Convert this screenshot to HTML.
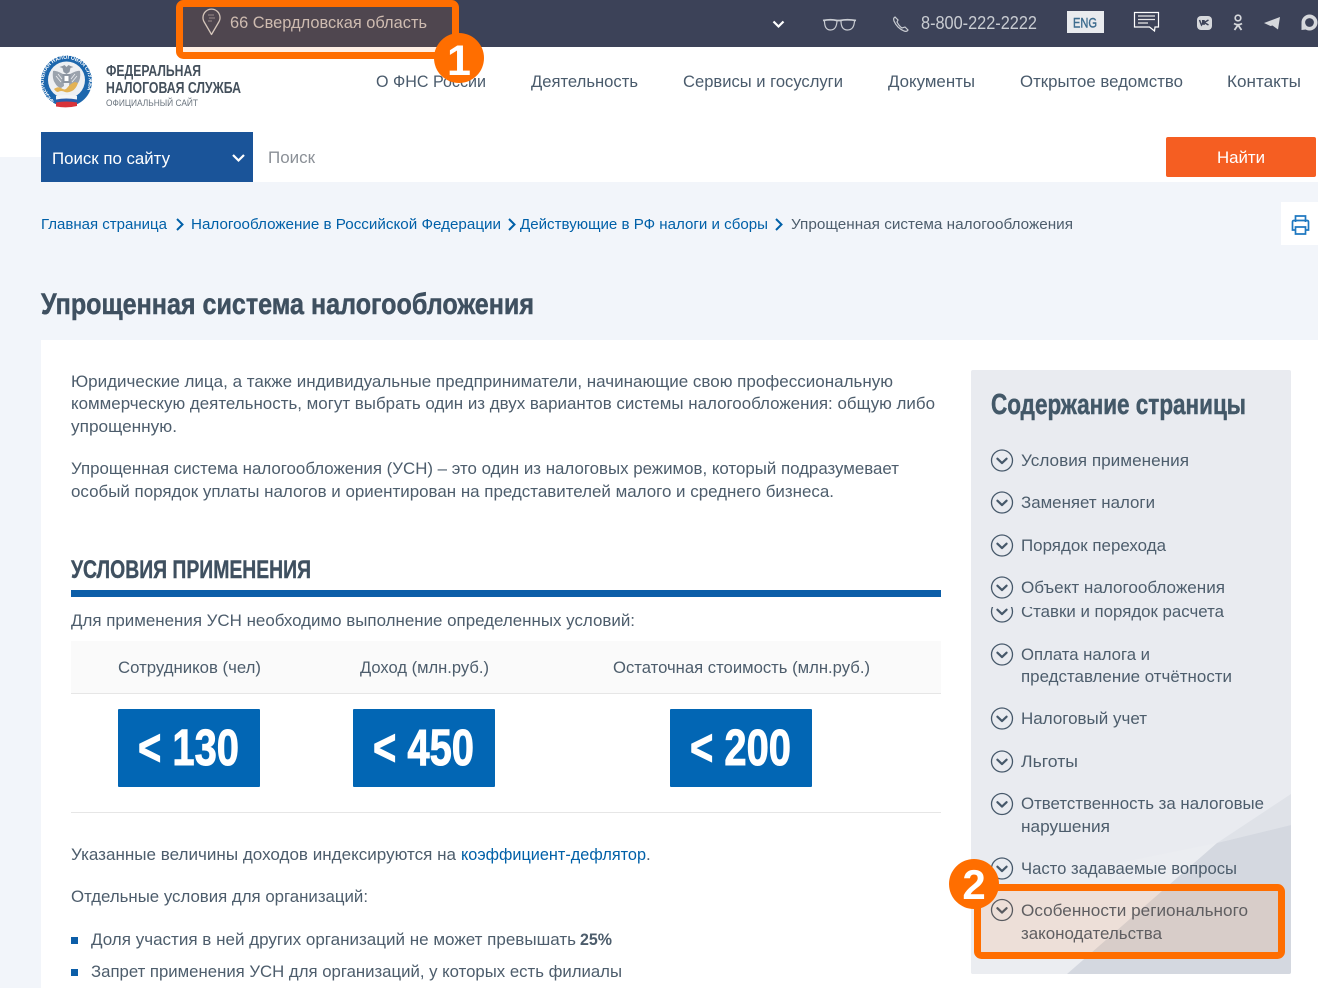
<!DOCTYPE html>
<html lang="ru"><head><meta charset="utf-8"><title>Упрощенная система налогообложения</title>
<style>
html,body{margin:0;padding:0;background:#f2f5fa}
body{width:1318px;height:988px;overflow:hidden}
svg{display:block}
text{font-family:"Liberation Sans",sans-serif;font-size:17px;fill:#4d5d6c;white-space:pre}
.b{font-weight:700}
.l{fill:#0060a8}
.c{font-size:14.5px}
.n{fill:#4a5b6c}
.ic{fill:none;stroke:#46586a;stroke-width:1.3}
.ch{fill:none;stroke:#46586a;stroke-width:2.2;stroke-linecap:round;stroke-linejoin:round}
.w{fill:none;stroke:#c9ccd2;stroke-width:1.2}
</style></head><body>
<svg xmlns="http://www.w3.org/2000/svg" width="1318" height="988" viewBox="0 0 1318 988">
<defs>
<clipPath id="clipStavki"><rect x="985" y="607" width="300" height="30"/></clipPath>
<clipPath id="panel"><rect x="971" y="370" width="320" height="604" rx="2"/></clipPath>
<path id="ringArc" d="M54.500 100.500 A22.500 22.500 0 1 1 79 100"/>
<g id="ico"><circle cx="0" cy="0" r="10.5" class="ic"/><path d="M-4.6 -1.8 L0 2.6 L4.6 -1.8" class="ch"/></g>
</defs>

<!-- backgrounds -->
<rect width="1318" height="988" fill="#f2f5fa"/>
<rect y="47" width="1318" height="110" fill="#fff"/>
<rect x="0" width="1318" height="47" fill="#3c4258"/>
<rect x="41" y="132" width="1277" height="50" fill="#fff"/>
<rect x="41" y="340" width="1277" height="648" fill="#fff"/>

<!-- top bar -->
<path d="M211.500 34.500 L204.200 22 A8.500 8.500 0 1 1 218.800 22 Z" fill="none" stroke="#d0d0d0" stroke-width="1.300" stroke-linejoin="round"/>
<path d="M208 15h6M209 18h6M208 21h4" stroke="#a9a9ad" stroke-width=".8"/>
<text x="230" y="28" textLength="197" lengthAdjust="spacingAndGlyphs" style="fill:#c9c5c5">66 Свердловская область</text>
<path d="M773.500 21.500 L778.500 26.500 L783.500 21.500" fill="none" stroke="#fff" stroke-width="2.200"/>
<path d="M823 20.500 q8 -1.500 14 0 h3 q7 -1.500 16 0" fill="none" stroke="#c9ccd2" stroke-width="1.800"/>
<path d="M824.500 21 q0 9 6 9 q6 0 6.500 -9 M841 21 q0 9 6.500 9 q6.500 0 7 -9" class="w"/>
<path d="M895 17 q-2 1 -1 4 q3 7 10 10 q3 1 4 -1 l-3 -3 l-3 1 q-3 -2 -5 -6 l1 -2 z" class="w"/>
<text x="921" y="29" textLength="116" lengthAdjust="spacingAndGlyphs" style="font-size:18px;fill:#c9ccd2">8-800-222-2222</text>
<rect x="1067" y="11" width="37" height="22" fill="#e9ebee"/>
<text x="1073" y="27.500" textLength="24" lengthAdjust="spacingAndGlyphs" style="font-size:14px;fill:#3d6c8e;stroke:#3d6c8e;stroke-width:.4">ENG</text>
<path d="M1134.500 12.500 h24 v14.500 h-3.500 l-0.500 4 l-5 -4 h-15 z" fill="none" stroke="#fff" stroke-width="1.200"/>
<path d="M1138 16 h17 M1138 19.500 h17 M1138 23 h10" stroke="#e8e8e8" stroke-width="1.300"/>
<rect x="1197" y="16" width="15" height="14" rx="4" fill="#d6d8dc"/>
<path d="M1199.500 20 l2 5 l1.200 -1.500 v-3.500 M1204 20 v5 M1208.500 20 l-4.300 2.500 l4.300 2.500" fill="none" stroke="#3c4258" stroke-width="1.500"/>
<circle cx="1238" cy="18" r="2.800" fill="none" stroke="#d6d8dc" stroke-width="1.700"/>
<path d="M1234 23.500 q4 2.500 8 0 M1238 25 l-3.500 5 M1238 25 l3.500 5" fill="none" stroke="#d6d8dc" stroke-width="1.800"/>
<path d="M1264 23 L1280 17 L1278 29.500 L1272.500 25.500 L1270.500 26 Z" fill="#d6d8dc"/>
<circle cx="1309.500" cy="22.500" r="6.200" fill="none" stroke="#d6d8dc" stroke-width="3.600"/>
<path d="M1301.500 23 L1301.500 30 L1306 29.500 Z" fill="#d6d8dc"/>

<!-- logo -->
<circle cx="66.500" cy="81" r="25.500" fill="#1d67ad"/>
<circle cx="66.500" cy="80" r="18.500" fill="#eef0f3"/>
<text style="font-size:5.500px;fill:#fff" class="b"><textPath href="#ringArc" textLength="102" lengthAdjust="spacingAndGlyphs">ФЕДЕРАЛЬНАЯ НАЛОГОВАЯ СЛУЖБА</textPath></text>
<path d="M66.500 74 l-3 -2 l-1 -4 l-3 -1 l3 -1 l2 -1 l2 2 l2 -2 l2 1 l3 1 l-3 1 l-1 4 z" fill="#8d96a2"/>
<path d="M63 74 q-8 -4 -10 -3 q-1 8 2 12 q2 4 6 5 l3 -2 z M70 74 q8 -4 10 -3 q1 8 -2 12 q-2 4 -6 5 l-3 -2 z" fill="#9ba3ad"/>
<path d="M56 76 l5 6 M58 74 l4 5 M77 76 l-5 6 M75 74 l-4 5" stroke="#eef0f3" stroke-width=".8"/>
<rect x="62.500" y="74" width="8" height="9" fill="#8d96a2"/>
<rect x="64.500" y="76" width="4" height="5" fill="#fff"/>
<path d="M54 89 q4 -3 7 -1 q4 3 6 0 q4 -5 8 -6 l3 1 q-2 6 -6 8 q-4 2 -7 1 q-4 -2 -7 0 q-2 0 -4 -3 z" fill="#e3b254"/>
<path d="M56 96 q10 -2 21 0 v4 q-10 -2 -21 0 z" fill="#f4f5f7"/>
<path d="M56 99.500 q10 -2 21 0 v3 q-10 -2 -21 0 z" fill="#2a5caa"/>
<path d="M56 102.500 q10 -2 21 0 v3.500 q-10 2.500 -21 .5 z" fill="#d8333a"/>
<text x="106" y="76" textLength="95" lengthAdjust="spacingAndGlyphs" class="b" style="font-size:16px;fill:#44505c">ФЕДЕРАЛЬНАЯ</text>
<text x="106" y="93" textLength="135" lengthAdjust="spacingAndGlyphs" class="b" style="font-size:16px;fill:#44505c">НАЛОГОВАЯ СЛУЖБА</text>
<text x="106" y="106" textLength="92" lengthAdjust="spacingAndGlyphs" style="font-size:9.500px;fill:#6a747e">ОФИЦИАЛЬНЫЙ САЙТ</text>

<!-- nav -->
<text class="n" x="376" y="87" textLength="110" lengthAdjust="spacingAndGlyphs">О ФНС России</text>
<text class="n" x="531" y="87" textLength="107" lengthAdjust="spacingAndGlyphs">Деятельность</text>
<text class="n" x="683" y="87" textLength="160" lengthAdjust="spacingAndGlyphs">Сервисы и госуслуги</text>
<text class="n" x="888" y="87" textLength="87" lengthAdjust="spacingAndGlyphs">Документы</text>
<text class="n" x="1020" y="87" textLength="163" lengthAdjust="spacingAndGlyphs">Открытое ведомство</text>
<text class="n" x="1227" y="87" textLength="74" lengthAdjust="spacingAndGlyphs">Контакты</text>

<!-- search -->
<rect x="41" y="132" width="212" height="50" fill="#1a5499"/>
<text x="52" y="164" textLength="118" lengthAdjust="spacingAndGlyphs" style="fill:#fff">Поиск по сайту</text>
<path d="M233 155 L238.500 160.500 L244 155" fill="none" stroke="#fff" stroke-width="2.200"/>
<text x="268" y="163" textLength="47" lengthAdjust="spacingAndGlyphs" style="fill:#8b9097">Поиск</text>
<rect x="1166" y="137" width="150" height="40" rx="2" fill="#f55e22"/>
<text x="1217" y="163" textLength="48" lengthAdjust="spacingAndGlyphs" style="fill:#fff">Найти</text>

<!-- breadcrumbs -->
<text class="c l" x="41" y="229" textLength="126" lengthAdjust="spacingAndGlyphs">Главная страница</text>
<path d="M177 219 l5.500 5.500 l-5.500 5.500" fill="none" stroke="#0060a8" stroke-width="2"/>
<text class="c l" x="191" y="229" textLength="310" lengthAdjust="spacingAndGlyphs">Налогообложение в Российской Федерации</text>
<path d="M509 219 l5.500 5.500 l-5.500 5.500" fill="none" stroke="#0060a8" stroke-width="2"/>
<text class="c l" x="520" y="229" textLength="248" lengthAdjust="spacingAndGlyphs">Действующие в РФ налоги и сборы</text>
<path d="M776 219 l5.500 5.500 l-5.500 5.500" fill="none" stroke="#0060a8" stroke-width="2"/>
<text class="c" x="791" y="229" textLength="282" lengthAdjust="spacingAndGlyphs">Упрощенная система налогообложения</text>

<!-- print -->
<rect x="1281" y="202" width="37" height="43" fill="#fff"/>
<path d="M1296 222 v-6 h10 v6 M1296 230 h-3 v-8 q0 -1.500 1.500 -1.500 h13 q1.500 0 1.500 1.500 v8 h-3 M1296 227 h10 v7 h-10 z" fill="none" stroke="#1e78c0" stroke-width="1.700" transform="translate(-.500 0)"/>

<!-- title -->
<text class="b" x="41" y="314" textLength="493" lengthAdjust="spacingAndGlyphs" style="font-size:30px;fill:#3f5060;stroke:#3f5060;stroke-width:.5">Упрощенная система налогообложения</text>

<!-- body -->
<text x="71" y="387" textLength="822" lengthAdjust="spacingAndGlyphs">Юридические лица, а также индивидуальные предприниматели, начинающие свою профессиональную</text>
<text x="71" y="409" textLength="864" lengthAdjust="spacingAndGlyphs">коммерческую деятельность, могут выбрать один из двух вариантов системы налогообложения: общую либо</text>
<text x="71" y="432" textLength="106" lengthAdjust="spacingAndGlyphs">упрощенную.</text>
<text x="71" y="474" textLength="828" lengthAdjust="spacingAndGlyphs">Упрощенная система налогообложения (УСН) – это один из налоговых режимов, который подразумевает</text>
<text x="71" y="497" textLength="763" lengthAdjust="spacingAndGlyphs">особый порядок уплаты налогов и ориентирован на представителей малого и среднего бизнеса.</text>

<text class="b" x="71" y="578" textLength="240" lengthAdjust="spacingAndGlyphs" style="font-size:25px;fill:#3f5060;stroke:#3f5060;stroke-width:.4">УСЛОВИЯ ПРИМЕНЕНИЯ</text>
<rect x="71" y="590" width="870" height="7" fill="#0c5ea8"/>
<text x="71" y="626" textLength="564" lengthAdjust="spacingAndGlyphs">Для применения УСН необходимо выполнение определенных условий:</text>

<!-- table -->
<rect x="71" y="641" width="870" height="52" fill="#fafafa"/>
<rect x="71" y="693" width="870" height="1" fill="#e6e6e6"/>
<rect x="71" y="812" width="870" height="1" fill="#e6e6e6"/>
<text x="118" y="673" textLength="143" lengthAdjust="spacingAndGlyphs">Сотрудников (чел)</text>
<text x="360" y="673" textLength="129" lengthAdjust="spacingAndGlyphs">Доход (млн.руб.)</text>
<text x="613" y="673" textLength="257" lengthAdjust="spacingAndGlyphs">Остаточная стоимость (млн.руб.)</text>
<rect x="118" y="709" width="142" height="78" rx="1" fill="#0266b4"/>
<rect x="353" y="709" width="142" height="78" rx="1" fill="#0266b4"/>
<rect x="670" y="709" width="142" height="78" rx="1" fill="#0266b4"/>
<text class="b" x="138" y="765" textLength="101" lengthAdjust="spacingAndGlyphs" style="font-size:51px;fill:#fff;stroke:#fff;stroke-width:1">&lt; 130</text>
<text class="b" x="373" y="765" textLength="101" lengthAdjust="spacingAndGlyphs" style="font-size:51px;fill:#fff;stroke:#fff;stroke-width:1">&lt; 450</text>
<text class="b" x="690" y="765" textLength="101" lengthAdjust="spacingAndGlyphs" style="font-size:51px;fill:#fff;stroke:#fff;stroke-width:1">&lt; 200</text>

<text x="71" y="860" textLength="385" lengthAdjust="spacingAndGlyphs">Указанные величины доходов индексируются на</text>
<text class="l" x="461" y="860" textLength="185" lengthAdjust="spacingAndGlyphs">коэффициент-дефлятор</text>
<text x="646" y="860">.</text>
<text x="71" y="902" textLength="297" lengthAdjust="spacingAndGlyphs">Отдельные условия для организаций:</text>
<rect x="71" y="937" width="7" height="7" fill="#0c5ea8"/>
<text x="91" y="945" textLength="485" lengthAdjust="spacingAndGlyphs">Доля участия в ней других организаций не может превышать</text>
<text class="b" x="580" y="945" textLength="32" lengthAdjust="spacingAndGlyphs">25%</text>
<rect x="71" y="969" width="7" height="7" fill="#0c5ea8"/>
<text x="91" y="977" textLength="531" lengthAdjust="spacingAndGlyphs">Запрет применения УСН для организаций, у которых есть филиалы</text>

<!-- sidebar -->
<rect x="971" y="370" width="320" height="604" rx="2" fill="#e9ebf0"/>
<g clip-path="url(#panel)">
<path d="M1217 843 L971 893 V974 H1067 Z" fill="#ebedf1"/>
<path d="M1291 794 L1217 843 L1291 825 Z" fill="#dfe2e8"/>
<path d="M1291 825 L1217 843 L1067 974 H1291 Z" fill="#d4d8e0"/>
</g>
<text class="b" x="991" y="414" textLength="255" lengthAdjust="spacingAndGlyphs" style="font-size:29px;fill:#435868;stroke:#435868;stroke-width:.5">Содержание страницы</text>

<use href="#ico" x="1002" y="460.500"/>
<text x="1021" y="466" textLength="168" lengthAdjust="spacingAndGlyphs">Условия применения</text>
<use href="#ico" x="1002" y="502.500"/>
<text x="1021" y="508" textLength="134" lengthAdjust="spacingAndGlyphs">Заменяет налоги</text>
<use href="#ico" x="1002" y="545.500"/>
<text x="1021" y="551" textLength="145" lengthAdjust="spacingAndGlyphs">Порядок перехода</text>
<use href="#ico" x="1002" y="587.500"/>
<text x="1021" y="593" textLength="204" lengthAdjust="spacingAndGlyphs">Объект налогообложения</text>
<g clip-path="url(#clipStavki)">
<use href="#ico" x="1002" y="611.500"/>
<text x="1021" y="617" textLength="203" lengthAdjust="spacingAndGlyphs">Ставки и порядок расчета</text>
</g>
<use href="#ico" x="1002" y="654.500"/>
<text x="1021" y="660" textLength="129" lengthAdjust="spacingAndGlyphs">Оплата налога и</text>
<text x="1021" y="682" textLength="211" lengthAdjust="spacingAndGlyphs">представление отчётности</text>
<use href="#ico" x="1002" y="718.500"/>
<text x="1021" y="724" textLength="126" lengthAdjust="spacingAndGlyphs">Налоговый учет</text>
<use href="#ico" x="1002" y="761.500"/>
<text x="1021" y="767" textLength="57" lengthAdjust="spacingAndGlyphs">Льготы</text>
<use href="#ico" x="1002" y="804"/>
<text x="1021" y="809" textLength="243" lengthAdjust="spacingAndGlyphs">Ответственность за налоговые</text>
<text x="1021" y="832" textLength="89" lengthAdjust="spacingAndGlyphs">нарушения</text>
<use href="#ico" x="1002" y="868.500"/>
<text x="1021" y="874" textLength="216" lengthAdjust="spacingAndGlyphs">Часто задаваемые вопросы</text>
<use href="#ico" x="1002" y="910"/>
<text x="1021" y="916" textLength="227" lengthAdjust="spacingAndGlyphs">Особенности регионального</text>
<text x="1021" y="939" textLength="141" lengthAdjust="spacingAndGlyphs">законодательства</text>

<!-- annotations -->
<rect x="179.500" y="3.500" width="276" height="52" rx="4" fill="#ff6e00" fill-opacity=".1" stroke="#ff6e00" stroke-width="7"/>
<circle cx="459" cy="58" r="25" fill="#ff6e00"/>
<text class="b" x="459" y="75" text-anchor="middle" style="font-size:43px;fill:#fff">1</text>
<rect x="977.500" y="887.500" width="304" height="68" rx="4" fill="#ff6e00" fill-opacity=".1" stroke="#ff6e00" stroke-width="7"/>
<circle cx="974" cy="884" r="25" fill="#ff6e00"/>
<text class="b" x="974" y="899" text-anchor="middle" style="font-size:42px;fill:#fff">2</text>
</svg>
</body></html>
